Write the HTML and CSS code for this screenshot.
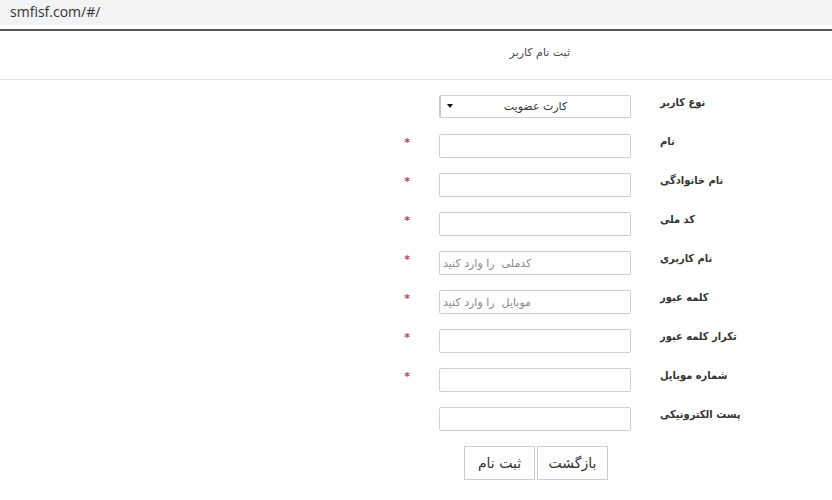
FILE: index.html
```html
<!DOCTYPE html>
<html lang="fa">
<head>
<meta charset="utf-8">
<title>ثبت نام کاربر</title>
<link rel="stylesheet" href="styles.css">
</head>
<body>
<div class="urlbar">smfisf.com/#/</div>
<div class="page">
  <div class="header"><span class="title">ثبت نام کاربر</span></div>
  <form class="form">
    <div class="row">
      <label class="label">نوع کاربر</label>
      <div class="select"><span class="select-text">کارت عضویت</span><span class="arrow"></span></div>
      <span></span>
    </div>
    <div class="row">
      <label class="label">نام</label>
      <input class="input" type="text">
      <span class="star">*</span>
    </div>
    <div class="row">
      <label class="label">نام خانوادگی</label>
      <input class="input" type="text">
      <span class="star">*</span>
    </div>
    <div class="row">
      <label class="label">کد ملی</label>
      <input class="input" type="text">
      <span class="star">*</span>
    </div>
    <div class="row">
      <label class="label">نام کاربری</label>
      <input class="input" type="text" placeholder="کدملی  را وارد کنید">
      <span class="star">*</span>
    </div>
    <div class="row">
      <label class="label">کلمه عبور</label>
      <input class="input" type="text" placeholder="موبایل  را وارد کنید">
      <span class="star">*</span>
    </div>
    <div class="row">
      <label class="label">تکرار کلمه عبور</label>
      <input class="input" type="text">
      <span class="star">*</span>
    </div>
    <div class="row">
      <label class="label">شماره موبایل</label>
      <input class="input" type="text">
      <span class="star">*</span>
    </div>
    <div class="row">
      <label class="label">پست الکترونیکی</label>
      <input class="input" type="text">
      <span></span>
    </div>
    <div class="row buttons-row">
      <span></span>
      <div class="buttons">
        <button type="button" class="btn">بازگشت</button>
        <button type="button" class="btn">ثبت نام</button>
      </div>
      <span></span>
    </div>
  </form>
</div>
</body>
</html>
```
FILE: styles.css
```css
html, body {
  margin: 0;
  padding: 0;
  background: #ffffff;
}
body {
  font-family: "DejaVu Sans", "Noto Sans", sans-serif;
  color: #333;
  width: 832px;
  height: 500px;
  overflow: hidden;
}
.urlbar {
  height: 25px;
  background: #f1f3f4;
  font-family: "Open Sans", "DejaVu Sans", sans-serif;
  font-size: 14px;
  line-height: 24px;
  padding-left: 10px;
  color: #333;
  border-bottom: 4px solid #ffffff;
}
.page {
  border-top: 2px solid #555;
  direction: rtl;
}
.header {
  height: 48px;
  border-bottom: 1px solid #e3e3e3;
  padding-right: 262px;
  display: flex;
  align-items: center;
}
.title {
  font-size: 11px;
  color: #444;
  margin-top: -5px;
}
.form {
  padding-top: 15px;
  padding-right: 81px;
  display: flex;
  flex-direction: column;
  gap: 15px;
}
.row {
  display: grid;
  grid-template-columns: 120px 192px 29px 8px;
  align-items: start;
  height: 24px;
}
.label {
  box-sizing: border-box;
  font-family: "DejaVu Sans Condensed", "DejaVu Sans", sans-serif;
  font-size: 11px;
  font-weight: bold;
  color: #333;
  line-height: 14px;
  padding-top: 1px;
  padding-left: 29px;
  text-align: left;
  white-space: nowrap;
}
.input {
  box-sizing: border-box;
  width: 192px;
  height: 24px;
  margin: 0;
  border: 1px solid #cfcfcf;
  border-radius: 2px;
  padding: 0 3px;
  font-family: "DejaVu Sans", sans-serif;
  font-size: 11px;
  direction: rtl;
  text-align: left;
  background: #fff;
}
.input::placeholder {
  color: #888;
}
.select {
  box-sizing: border-box;
  width: 192px;
  height: 23px;
  border: 1px solid #cfcfcf;
  border-left: 2px solid #c9c9c9;
  border-radius: 2px;
  display: flex;
  align-items: center;
  justify-content: center;
  position: relative;
  font-size: 11px;
  color: #333;
}
.arrow {
  position: absolute;
  left: 6px;
  top: 8px;
  width: 0;
  height: 0;
  border-left: 3px solid transparent;
  border-right: 3px solid transparent;
  border-top: 4px solid #111;
}
.star {
  grid-column: 4;
  color: #b5424b;
  font-size: 11px;
  line-height: 11px;
  margin-top: 3px;
  font-weight: bold;
}
.buttons-row {
  height: 34px;
}
.buttons {
  display: flex;
  justify-content: center;
  gap: 2px;
  margin-right: -2px;
}
.btn {
  width: 71px;
  height: 34px;
  background: #fff;
  border: 1px solid #cccccc;
  font-family: "DejaVu Sans", sans-serif;
  font-size: 14px;
  color: #333;
  padding: 0;
  margin: 0;
}
```
